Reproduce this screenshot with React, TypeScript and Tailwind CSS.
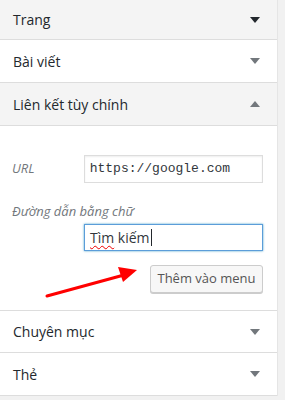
import React from "react";

function Arrow({ up, dark }: { up?: boolean; dark?: boolean }) {
  return (
    <svg width="10" height="6" viewBox="0 0 10 6" className="shrink-0">
      {up ? (
        <polygon points="0,6 10,6 5,0" fill={dark ? "#23282d" : "#72777c"} />
      ) : (
        <polygon points="0,0 10,0 5,6" fill={dark ? "#23282d" : "#72777c"} />
      )}
    </svg>
  );
}

function Header({
  title,
  h,
  gray,
  up,
  dark,
}: {
  title: string;
  h: string;
  gray?: boolean;
  up?: boolean;
  dark?: boolean;
}) {
  return (
    <div
      className={`flex items-center justify-between pl-[13px] pr-[17px] border-b border-[#dddddd] ${h} ${
        gray ? "bg-[#f4f4f4]" : "bg-white"
      }`}
    >
      <span className="text-[14px] text-[#23282d] font-medium">{title}</span>
      <Arrow up={up} dark={dark} />
    </div>
  );
}

export default function App() {
  return (
    <div
      className="w-[285px] h-[400px] bg-[#f1f1f1] overflow-hidden relative"
      style={{ fontFamily: "'Open Sans', 'Noto Sans', sans-serif" }}
    >
      <div className="w-[278px] bg-white border-r border-[#e5e5e5]">
        <Header title="Trang" h="h-[40px]" gray dark />
        <Header title="Bài viết" h="h-[43px]" />
        <Header title="Liên kết tùy chính" h="h-[43px]" gray up />
        <div className="h-[185px] border-b border-[#dddddd] pl-[12px] pr-[14px] pt-[29px]">
          <div className="flex items-center">
            <span className="w-[72px] text-[13px] italic text-[#72777c]">URL</span>
            <div className="w-[180px] h-[28px] border border-[#dddddd] flex items-center pl-[5px] shadow-[inset_0_1px_2px_rgba(0,0,0,0.07)]">
              <span
                className="text-[13px] text-[#32373c]"
                style={{ fontFamily: "'Liberation Mono', monospace" }}
              >
                https://google.com
              </span>
            </div>
          </div>
          <div className="mt-[19px] text-[13px] italic text-[#72777c] leading-[18px]">
            Đường dẫn bằng chữ
          </div>
          <div className="flex mt-[4px]">
            <div className="ml-[72px] w-[180px] h-[27px] border border-[#5b9dd9] shadow-[0_0_2px_rgba(30,140,190,0.8)] flex items-center pl-[5px]">
              <span className="text-[14px] text-[#32373c] underline decoration-wavy decoration-[#e00] decoration-1 underline-offset-2">
                Tìm
              </span>
              <span className="text-[14px] text-[#32373c]">&nbsp;kiếm</span>
              <span className="w-px h-[17px] bg-[#23282d] ml-px" />
            </div>
          </div>
          <div className="flex justify-end mt-[14px]">
            <div className="w-[113px] h-[28px] border border-[#cccccc] rounded-[3px] bg-[#f7f7f7] shadow-[0_1px_0_#cccccc] flex items-center justify-center text-[13px] text-[#555555]">
              Thêm vào menu
            </div>
          </div>
        </div>
        <Header title="Chuyên mục" h="h-[42px]" />
        <Header title="Thẻ" h="h-[43px]" />
      </div>
      <svg
        className="absolute left-0 top-0 pointer-events-none"
        width="285"
        height="400"
        viewBox="0 0 285 400"
      >
        <line x1="47" y1="296" x2="124" y2="275" stroke="#ff0000" strokeWidth="3" strokeLinecap="round" />
        <polygon points="137,270 118,267 123,282" fill="#ff0000" />
      </svg>
    </div>
  );
}
